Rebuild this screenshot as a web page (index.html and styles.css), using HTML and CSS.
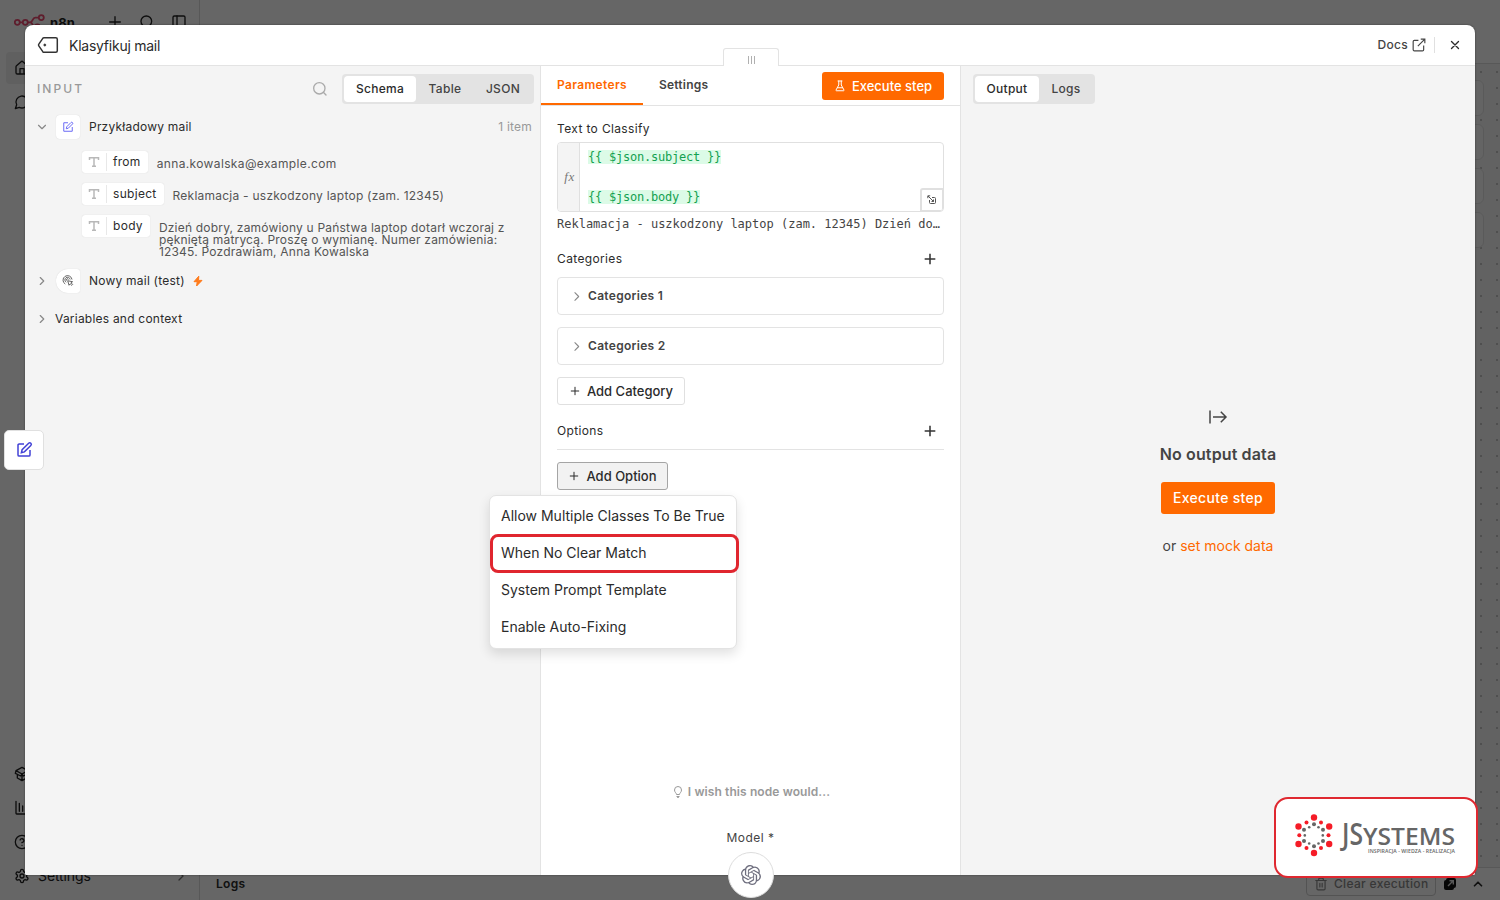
FILE: index.html
```html
<!DOCTYPE html>
<html lang="pl">
<head>
<meta charset="utf-8">
<title>n8n – Klasyfikuj mail</title>
<link rel="stylesheet" href="styles.css">
</head>
<body>
<div class="app">
  <aside class="sidebar">
    <div class="brand">
      <svg class="brand-mark" width="32" height="16" viewBox="0 0 32 16" fill="none" stroke="#ea4b71" stroke-width="1.8"><circle cx="3.3" cy="8.3" r="2.5"/><circle cx="11.3" cy="8.3" r="2.5"/><circle cx="27.3" cy="3.6" r="2.5"/><circle cx="23.3" cy="13" r="2.5"/><path d="M5.8 8.3h3M13.8 8.3h2.4c3 0 2-4.7 5-4.7h3.6M16.2 8.3c3 0 2 4.7 4.6 4.7"/></svg>
      <span class="brand-name">n8n</span>
      <svg class="ic add" width="16" height="16" viewBox="0 0 24 24"><path d="M4 12h16M12 4v16"/></svg>
      <svg class="ic find" width="16" height="16" viewBox="0 0 24 24"><circle cx="11" cy="11" r="8"/><path d="m21 21-4.3-4.3"/></svg>
      <svg class="ic panel" width="16" height="16" viewBox="0 0 24 24"><rect x="3" y="3" width="18" height="18" rx="2"/><path d="M9 3v18"/></svg>
    </div>
    <div class="side-item active"><svg class="ic" width="16" height="16" viewBox="0 0 24 24"><path d="M15 21v-8H9v8M3 10a2 2 0 0 1 .7-1.5l7-6a2 2 0 0 1 2.6 0l7 6A2 2 0 0 1 21 10v9a2 2 0 0 1-2 2H5a2 2 0 0 1-2-2z"/></svg></div>
    <div class="side-item chat"><svg class="ic" width="16" height="16" viewBox="0 0 24 24"><path d="M7.9 20A9 9 0 1 0 4 16.100L2 22Z"/></svg></div>
    <div class="side-bottom">
      <div class="side-item"><svg class="ic" width="16" height="16" viewBox="0 0 24 24"><path d="M12 22v-9M3 7l9-5 9 5-9 5zM3 7l-1 4 8 4 2-3 2 3 8-4-1-4M5 13v5l7 4 7-4v-5"/></svg></div>
      <div class="side-item"><svg class="ic" width="16" height="16" viewBox="0 0 24 24"><path d="M3 2v18a1 1 0 0 0 1 1h18M8 17V5M13 17V9M18 17v-4"/></svg></div>
      <div class="side-item"><svg class="ic" width="16" height="16" viewBox="0 0 24 24"><circle cx="12" cy="12" r="10"/><path d="M9.100 9a3 3 0 0 1 5.800 1c0 2-3 3-3 3M12 17h.01"/></svg></div>
      <div class="side-item"><svg class="ic" width="16" height="16" viewBox="0 0 24 24"><path d="M12.200 2h-.4a2 2 0 0 0-2 2v.2a2 2 0 0 1-1 1.700l-.4.3a2 2 0 0 1-2 0l-.2-.1a2 2 0 0 0-2.700.7l-.2.4a2 2 0 0 0 .7 2.700l.2.1a2 2 0 0 1 1 1.700v.5a2 2 0 0 1-1 1.800l-.2.1a2 2 0 0 0-.7 2.700l.2.4a2 2 0 0 0 2.700.7l.2-.1a2 2 0 0 1 2 0l.4.3a2 2 0 0 1 1 1.700v.2a2 2 0 0 0 2 2h.4a2 2 0 0 0 2-2v-.2a2 2 0 0 1 1-1.700l.4-.3a2 2 0 0 1 2 0l.2.1a2 2 0 0 0 2.700-.7l.2-.4a2 2 0 0 0-.7-2.700l-.2-.1a2 2 0 0 1-1-1.800v-.5a2 2 0 0 1 1-1.700l.2-.1a2 2 0 0 0 .7-2.700l-.2-.4a2 2 0 0 0-2.700-.7l-.2.1a2 2 0 0 1-2 0l-.4-.3a2 2 0 0 1-1-1.700V4a2 2 0 0 0-2-2z"/><circle cx="12" cy="12" r="3"/></svg><span class="side-label">Settings</span><svg class="ic side-chev" width="16" height="16" viewBox="0 0 24 24"><path d="m9 18 6-6-6-6"/></svg></div>
    </div>
  </aside>
  <main class="workspace">
    <div class="topbar"></div>
    <div class="canvas"><i class="tile"></i><i class="tile"></i><i class="tile"></i><i class="tile"></i></div>
    <div class="logbar">
      <span class="logbar-title">Logs</span>
      <span class="clear"><svg class="ic" width="14" height="14" viewBox="0 0 24 24"><path d="M3 6h18M19 6v14a2 2 0 0 1-2 2H7a2 2 0 0 1-2-2V6M8 6V4a2 2 0 0 1 2-2h4a2 2 0 0 1 2 2v2M10 11v6M14 11v6"/></svg>Clear execution</span>
      <svg class="pop" width="14" height="14" viewBox="0 0 14 14"><rect x="1" y="3" width="10" height="10" rx="2" fill="#111"/><rect x="3" y="1" width="10" height="10" rx="2" fill="#111"/><path d="M5 9l5-5M6.500 3.700h3.800v3.800" stroke="#ddd" stroke-width="1.400" fill="none"/></svg>
      <svg class="ic up" width="14" height="14" viewBox="0 0 24 24"><path d="m6 15 6-6 6 6"/></svg>
    </div>
  </main>
</div>
<div class="shade"></div>

<section class="modal">
  <header class="modal-head">
    <svg width="22" height="18" viewBox="0 0 22 18" fill="none" stroke="#333" stroke-width="1.500" stroke-linejoin="round"><path d="M7 1.700h11.800a1.500 1.500 0 0 1 1.500 1.500v11.600a1.500 1.500 0 0 1-1.500 1.500H7a1.500 1.500 0 0 1-1.200-.6L1.800 9.800a1.300 1.300 0 0 1 0-1.600l4-5.900A1.500 1.500 0 0 1 7 1.700z"/><circle cx="7.800" cy="9" r="1" fill="#333" stroke-width=".8"/></svg>
    <h1 class="node-name">Klasyfikuj mail</h1>
    <a class="docs">Docs<svg class="ic" width="14" height="14" viewBox="0 0 24 24"><path d="M15 2h7v7M10 14 22 2M20 13v7a2 2 0 0 1-2 2H4a2 2 0 0 1-2-2V6a2 2 0 0 1 2-2h7"/></svg></a>
    <span class="head-rule"></span>
    <svg class="ic close" width="14" height="14" viewBox="0 0 24 24"><path d="M18 6 6 18M6 6l12 12"/></svg>
    <div class="grip"><i></i><i></i><i></i></div>
  </header>
  <div class="panes">
    <div class="pane input">
      <div class="pane-head">
        <span class="pane-title">INPUT</span>
        <svg class="ic search" width="16" height="16" viewBox="0 0 24 24"><circle cx="11" cy="11" r="8.500"/><path d="m21 21-4-4"/></svg>
        <div class="seg"><span class="on w72">Schema</span><span class="w58">Table</span><span class="w58">JSON</span></div>
      </div>
      <div class="node-row">
        <svg class="ic chev" width="14" height="14" viewBox="0 0 24 24"><path d="m6 9 6 6 6-6"/></svg>
        <span class="node-icon"><svg width="12" height="12" viewBox="0 0 24 24" fill="none" stroke="#6b6bf5" stroke-width="2"><path d="M12 3.500H3.500v17h17V12M17.900 3.100a2 2 0 0 1 3 3L12.500 14.500 8.500 15.500l1-4z"/></svg></span>
        <span class="node-label">Przykładowy mail</span>
        <span class="count">1 item</span>
      </div>
      <div class="fields">
        <div class="field wide"><span class="pill"><span class="type"><svg width="12" height="12" viewBox="0 0 12 12" fill="none" stroke="#b8b8b8" stroke-width="1.500"><path d="M1.500 4V1.700h9V4M6 1.700v8.600M4 10.300h4"/></svg></span><span class="key">from</span></span><p class="value">anna.kowalska@example.com</p></div>
        <div class="field mid"><span class="pill"><span class="type"><svg width="12" height="12" viewBox="0 0 12 12" fill="none" stroke="#b8b8b8" stroke-width="1.500"><path d="M1.500 4V1.700h9V4M6 1.700v8.600M4 10.300h4"/></svg></span><span class="key">subject</span></span><p class="value">Reklamacja - uszkodzony laptop (zam. 12345)</p></div>
        <div class="field"><span class="pill"><span class="type"><svg width="12" height="12" viewBox="0 0 12 12" fill="none" stroke="#b8b8b8" stroke-width="1.500"><path d="M1.500 4V1.700h9V4M6 1.700v8.600M4 10.300h4"/></svg></span><span class="key">body</span></span><p class="value">Dzień dobry, zamówiony u Państwa laptop dotarł wczoraj z<br>pękniętą matrycą. Proszę o wymianę. Numer zamówienia:<br>12345. Pozdrawiam, Anna Kowalska</p></div>
      </div>
      <div class="node-row">
        <svg class="ic chev" width="14" height="14" viewBox="0 0 24 24"><path d="m9 6 6 6-6 6"/></svg>
        <span class="node-icon trigger"><svg width="12" height="12" viewBox="0 0 24 24" fill="none" stroke="#555" stroke-width="1.800"><path d="M6.500 18A9 9 0 1 1 20 9M8.500 14.500A5.300 5.300 0 1 1 16.300 9M10.500 11.500a2 2 0 1 1 2.500-2.500"/><path d="M11.500 11.500l2.500 9 2.300-3 3.200 3.200 1.800-1.800-3.200-3.200 3-2.300z"/></svg></span>
        <span class="node-label">Nowy mail (test)</span>
        <svg class="bolt" width="10" height="12" viewBox="0 0 10 12"><path d="M5.800 1.200 1 6.700h3.200L3.600 11 9 5.400H5.500z" fill="#ff7a1a" stroke="#ff7a1a" stroke-linejoin="round"/></svg>
      </div>
      <div class="node-row context">
        <svg class="ic chev" width="14" height="14" viewBox="0 0 24 24"><path d="m9 6 6 6-6 6"/></svg>
        <span class="node-label">Variables and context</span>
      </div>
    </div>

    <div class="pane params">
      <div class="tabs">
        <span class="tab on">Parameters</span><span class="tab">Settings</span>
        <button class="run"><svg class="ic" width="12" height="12" viewBox="0 0 24 24"><path d="M8 2h8M9.500 2v8L4 20c-.4.900 0 1.500 1 1.500h14c1 0 1.400-.6 1-1.500L14.500 10V2M7 15.500h10"/></svg>Execute step</button>
      </div>
      <div class="form">
        <label class="lbl first">Text to Classify</label>
        <div class="expr">
          <span class="fx">fx</span>
          <div class="code"><div><mark>{{ $json.subject }}</mark></div><div>&nbsp;</div><div><mark>{{ $json.body }}</mark></div></div>
          <span class="expand"><svg width="10" height="10" viewBox="0 0 10 10" fill="none" stroke="#555"><path d="M5 2.500h2.500a1 1 0 0 1 1 1v4a1 1 0 0 1-1 1h-4a1 1 0 0 1-1-1V5M1 1l5.500 5.500M.8 3.200V.8h2.400M6.500 4.500v2h-2"/></svg></span>
        </div>
        <div class="preview">Reklamacja - uszkodzony laptop (zam. 12345) Dzień do…</div>
        <div class="lbl-row cats"><span class="lbl">Categories</span><svg class="ic plus" width="16" height="16" viewBox="0 0 24 24"><path d="M4 12h16M12 4v16"/></svg></div>
        <div class="card"><svg class="ic" width="13" height="13" viewBox="0 0 24 24"><path d="m9 5 7 7-7 7"/></svg>Categories 1</div>
        <div class="card"><svg class="ic" width="13" height="13" viewBox="0 0 24 24"><path d="m9 5 7 7-7 7"/></svg>Categories 2</div>
        <button class="add-btn category"><svg class="ic" width="12" height="12" viewBox="0 0 24 24"><path d="M4.500 12h15M12 4.500v15"/></svg>Add Category</button>
        <div class="lbl-row opts"><span class="lbl">Options</span><svg class="ic plus" width="16" height="16" viewBox="0 0 24 24"><path d="M4 12h16M12 4v16"/></svg></div>
        <button class="add-btn option"><svg class="ic" width="12" height="12" viewBox="0 0 24 24"><path d="M4.500 12h15M12 4.500v15"/></svg>Add Option</button>
      </div>
      <div class="wish"><svg width="10" height="12" viewBox="0 0 10 12" fill="none" stroke="#999"><path d="M3.500 8.500C3.500 7 1.500 6.300 1.500 4a3.500 3.500 0 0 1 7 0c0 2.300-2 3-2 4.500zM3.500 10.500h3M4 11.700h2"/></svg>I wish this node would...</div>
      <div class="model">Model *</div>
    </div>

    <div class="pane output">
      <div class="seg"><span class="on w64">Output</span><span class="w54">Logs</span></div>
      <div class="empty">
        <svg width="20" height="16" viewBox="0 0 20 16" fill="none" stroke="#444" stroke-width="1.500"><path d="M2 1.500v13M5 8h13M12.800 2.800 18 8l-5.200 5.200"/></svg>
        <h2 class="empty-title">No output data</h2>
        <button class="run-big">Execute step</button>
        <p class="mock">or <a>set mock data</a></p>
      </div>
    </div>
  </div>
</section>

<div class="float-node"><svg width="18" height="18" viewBox="0 0 24 24" fill="none" stroke="#4242d6" stroke-width="2"><path d="M12 4H5.500A1.500 1.500 0 0 0 4 5.500v13A1.500 1.500 0 0 0 5.500 20h13a1.500 1.500 0 0 0 1.500-1.500V12M18.200 3a2 2 0 0 1 2.900 2.900L12.500 14.500 8.500 15.700l1-4.200z"/></svg></div>
<div class="float-model"><svg width="20" height="20" viewBox="0 0 24 24" fill="#6e6e7e"><path d="M22.282 9.821a5.985 5.985 0 0 0-.516-4.910 6.046 6.046 0 0 0-6.510-2.900A6.065 6.065 0 0 0 4.981 4.180a5.985 5.985 0 0 0-3.998 2.900 6.046 6.046 0 0 0 .743 7.097 5.980 5.980 0 0 0 .510 4.911 6.051 6.051 0 0 0 6.515 2.900A5.985 5.985 0 0 0 13.260 24a6.056 6.056 0 0 0 5.772-4.206 5.990 5.990 0 0 0 3.998-2.900 6.056 6.056 0 0 0-.748-7.073zM13.260 22.430a4.476 4.476 0 0 1-2.876-1.040l.142-.081 4.778-2.758a.795.795 0 0 0 .393-.681v-6.737l2.020 1.169a.071.071 0 0 1 .038.052v5.583a4.504 4.504 0 0 1-4.495 4.493zM3.600 18.304a4.471 4.471 0 0 1-.535-3.014l.142.085 4.783 2.759a.771.771 0 0 0 .780 0l5.843-3.369v2.332a.080.080 0 0 1-.033.062L9.740 19.950a4.500 4.500 0 0 1-6.140-1.646zM2.340 7.896a4.485 4.485 0 0 1 2.366-1.973V11.600a.766.766 0 0 0 .388.677l5.815 3.354-2.020 1.169a.076.076 0 0 1-.071 0l-4.830-2.787A4.504 4.504 0 0 1 2.340 7.872zm16.597 3.855-5.833-3.387L15.119 7.200a.076.076 0 0 1 .071 0l4.830 2.791a4.494 4.494 0 0 1-.676 8.105v-5.678a.790.790 0 0 0-.407-.667zm2.010-3.023-.142-.085-4.774-2.782a.776.776 0 0 0-.785 0L9.409 9.230V6.897a.066.066 0 0 1 .028-.061l4.830-2.787a4.500 4.500 0 0 1 6.680 4.660zm-12.640 4.135-2.020-1.164a.080.080 0 0 1-.038-.057V6.075a4.500 4.500 0 0 1 7.375-3.453l-.142.080L8.704 5.460a.795.795 0 0 0-.393.681zm1.097-2.365 2.602-1.500 2.607 1.500v2.999l-2.597 1.500-2.607-1.500z"/></svg></div>

<div class="menu">
  <div class="menu-item">Allow Multiple Classes To Be True</div>
  <div class="menu-item">When No Clear Match</div>
  <div class="menu-item">System Prompt Template</div>
  <div class="menu-item">Enable Auto-Fixing</div>
  <div class="highlight"></div>
</div>

<div class="badge">
  <svg width="200" height="77" viewBox="1276 799 200 77">
    <g fill="#f51c27"><circle cx="1314" cy="817.500" r="3.200"/><circle cx="1314" cy="853" r="3.200"/><circle cx="1298.500" cy="826.500" r="3.200"/><circle cx="1329.200" cy="826.500" r="3.200"/><circle cx="1298.500" cy="844" r="3.200"/><circle cx="1329.200" cy="844" r="3.200"/><circle cx="1306.500" cy="822.500" r="2"/><circle cx="1321" cy="822.500" r="2"/><circle cx="1306.500" cy="848" r="2"/><circle cx="1321" cy="848" r="2"/><circle cx="1299.300" cy="835.300" r="2"/><circle cx="1328.500" cy="835.300" r="2"/></g>
    <g fill="#666"><circle cx="1314" cy="824.200" r="2"/><circle cx="1314" cy="846.300" r="2"/><circle cx="1304" cy="829.700" r="2"/><circle cx="1323" cy="829.700" r="2"/><circle cx="1304" cy="841" r="2"/><circle cx="1323" cy="841" r="2"/><circle cx="1309.200" cy="827.300" r="1.300"/><circle cx="1318.500" cy="827.300" r="1.300"/><circle cx="1309.200" cy="843.500" r="1.300"/><circle cx="1318.500" cy="843.500" r="1.300"/><circle cx="1304.800" cy="835.400" r="1.300"/><circle cx="1322.800" cy="835.400" r="1.300"/></g>
    <g class="logo-text"><text x="1342" y="844.500" font-size="30" textLength="21" lengthAdjust="spacingAndGlyphs">JS</text><text x="1363" y="844.500" font-size="23" textLength="92" lengthAdjust="spacingAndGlyphs">YSTEMS</text><text class="tagline" x="1368" y="853.400" font-size="5.200" textLength="87" lengthAdjust="spacing">INSPIRACJA - WIEDZA - REALIZACJA</text></g>
  </svg>
</div>
</body>
</html>
```

FILE: styles.css
```css
* { box-sizing: border-box; }
body { margin: 0; width: 1500px; height: 900px; overflow: hidden; position: relative; font-family: Inter, "Noto Sans", sans-serif; font-size: 12px; line-height: 16px; color: #2b2b2b; }
h1, h2, p { margin: 0; font-weight: 400; }
button { font-family: inherit; margin: 0; padding: 0; border: 0; display: flex; align-items: center; justify-content: center; }
svg { flex: none; display: block; }
.ic { fill: none; stroke: currentColor; stroke-width: 2; stroke-linecap: round; stroke-linejoin: round; }

/* Workspace behind the dialog */
.app { display: flex; width: 1500px; height: 900px; background: #fff; }
.sidebar { width: 200px; border-right: 1px solid #dcdcdc; display: flex; flex-direction: column; color: #222; }
.brand { height: 52px; padding: 14px 0 0 14px; display: flex; align-items: flex-start; }
.brand-name { margin: 1px 0 0 4px; width: 54px; font-size: 13px; font-weight: 700; letter-spacing: .1px; }
.add { margin-left: 3px; }
.find { margin-left: 16px; }
.panel { margin-left: 16px; }
.side-item { height: 34px; margin: 0 6px; padding-left: 8px; display: flex; align-items: center; }
.side-item.active { height: 32px; background: #efefef; border-radius: 4px; }
.chat { margin-top: 1px; }
.side-bottom { margin-top: auto; padding-bottom: 7px; }
.side-label { margin-left: 8px; width: 133px; font-size: 14px; letter-spacing: -.1px; }
.side-chev { color: #777; margin-left: 2px; }
.workspace { flex: 1; display: flex; flex-direction: column; }
.topbar { height: 64px; border-bottom: 1px solid #dcdcdc; }
.canvas { flex: 1; padding: 16px 16px 0 0; display: flex; flex-direction: column; align-items: flex-end; gap: 8px; background: radial-gradient(circle, #c4c4c4 .7px, transparent 1.1px) 9px 0 / 16px 16px #f5f5f5; }
.tile { width: 36px; height: 36px; border: 1px solid #e2e2e2; border-radius: 6px; background: #fbfbfb; }
.logbar { height: 33px; border-top: 1px solid #dcdcdc; padding: 0 15px 0 16px; display: flex; align-items: center; }
.logbar-title { flex: 1; font-weight: 600; letter-spacing: .3px; }
.clear { width: 130px; height: 24px; padding: 0 7px; border: 1px solid #d0d0d0; border-radius: 4px; display: flex; align-items: center; gap: 6px; font-size: 12px; font-weight: 500; color: #8a8a8a; letter-spacing: .32px; white-space: nowrap; }
.pop { margin-left: 7px; }
.up { margin-left: 14px; stroke-width: 3; }
.shade { position: absolute; inset: 0; background: rgba(0, 0, 0, .6); }

/* Dialog */
.modal { position: absolute; left: 25px; top: 25px; width: 1450px; height: 850px; background: #fff; border-radius: 8px 8px 2px 2px; overflow: hidden; display: flex; flex-direction: column; box-shadow: 0 0 2px rgba(0, 0, 0, .5); }
.modal-head { position: relative; flex: none; height: 41px; border-bottom: 1px solid #e3e3e3; padding: 0 13px 0 12px; display: flex; align-items: center; }
.node-name { margin-left: 10px; padding-top: 2px; font-size: 14px; letter-spacing: -.25px; }
.docs { margin-left: auto; display: flex; align-items: center; gap: 4px; font-weight: 500; letter-spacing: .3px; color: #444; }
.docs .ic { stroke-width: 2; stroke-linecap: butt; stroke-linejoin: miter; }
.head-rule { width: 1px; height: 16px; margin: 0 13px 0 8px; background: #e0e0e0; }
.close { stroke-width: 2.3; }
.grip { position: absolute; left: 698px; top: 23px; width: 56px; height: 18px; border: 1px solid #e3e3e3; border-bottom: 0; border-radius: 3px 3px 0 0; background: #fff; display: flex; justify-content: center; gap: 2px; padding-top: 7px; }
.grip i { width: 1px; height: 8px; background: #b0b0b0; }
.panes { flex: 1; display: flex; }
.pane { display: flex; flex-direction: column; }
.input { width: 515px; background: #f4f4f4; }
.params { width: 421px; border: solid #e3e3e3; border-width: 0 1px; }
.output { flex: 1; background: #f4f4f4; padding: 8px 12px 0; align-items: flex-start; }

.pane-head { height: 49px; padding: 8px 6px 0 12px; display: flex; align-items: flex-start; }
.pane-title { flex: 1; line-height: 30px; font-weight: 500; letter-spacing: 2.1px; color: #999; }
.search { margin: 7px 14px 0 0; color: #aaa; }
.seg { height: 30px; padding: 2px; border-radius: 4px; background: #e3e3e3; display: flex; }
.seg span { line-height: 26px; border-radius: 4px; text-align: center; font-weight: 500; letter-spacing: .3px; color: #444; }
.seg .on { background: #fff; color: #2b2b2b; }
.w72 { width: 72px; }
.w58 { width: 58px; }
.w64 { width: 64px; }
.w54 { width: 54px; }

.node-row { height: 24px; padding: 0 8px 0 10px; display: flex; align-items: center; letter-spacing: .22px; }
.chev { color: #888; margin-right: 7px; }
.node-icon { width: 24px; height: 24px; margin-right: 9px; border-radius: 4px; background: #fff; display: flex; align-items: center; justify-content: center; box-shadow: 0 0 1px #ccc; }
.trigger { border-radius: 12px 3px 3px 12px; }
.count { margin-left: auto; color: #999; }
.bolt { margin-left: 8px; }
.context { margin-top: 14px; }
.context .chev { margin-right: 6px; }
.fields { padding: 12px 30px 0 57px; height: 130px; display: flex; flex-direction: column; gap: 10px; }
.field { height: 22px; display: flex; align-items: flex-start; }
.pill { height: 22px; padding-right: 7px; background: #fff; border-radius: 3px; display: flex; align-items: center; box-shadow: 0 0 1px #ccc; }
.type { width: 25px; height: 18px; margin-right: 6px; border-right: 1px solid #e8e8e8; display: flex; align-items: center; justify-content: center; }
.key { letter-spacing: .3px; }
.value { margin: 7px 0 0 9px; line-height: 12px; color: #555; letter-spacing: .2px; white-space: nowrap; }
.mid .value { letter-spacing: .24px; }
.wide .value { letter-spacing: .36px; }

.tabs { flex: none; height: 40px; border-bottom: 1px solid #e3e3e3; padding-right: 16px; display: flex; align-items: flex-start; font-weight: 600; color: #444; }
.tab { height: 39px; line-height: 38px; padding: 0 16px; letter-spacing: .2px; }
.tab.on { width: 102px; padding-right: 0; letter-spacing: .35px; color: #ff6900; border-bottom: 2px solid #ff6900; }
.run { width: 122px; height: 28px; margin: 6px 0 0 auto; gap: 6px; border-radius: 3px; background: #ff6900; color: #fff; font-size: 13px; font-weight: 500; }
.form { padding: 0 16px; display: flex; flex-direction: column; }
.lbl { letter-spacing: .36px; }
.first { margin-top: 15px; }
.expr { position: relative; height: 70px; margin-top: 5px; border: 1px solid #e0e0e0; border-radius: 4px; display: flex; overflow: hidden; }
.fx { width: 22px; background: #f4f4f4; border-right: 1px solid #e0e0e0; padding-left: 2px; display: flex; align-items: center; justify-content: center; font: italic 13px "Liberation Serif", serif; letter-spacing: .5px; color: #777; }
.code { padding: 4px 0 0 8px; font: 12px/20px "DejaVu Sans Mono", monospace; letter-spacing: -.22px; }
.code mark { background: #dcfbe7; color: #12a150; }
.expand { position: absolute; right: -1px; bottom: -1px; width: 24px; height: 24px; border: 2px solid #e0e0e0; border-radius: 3px 0 3px 0; background: #fff; display: flex; align-items: center; justify-content: center; }
.preview { margin-top: 4px; font: 12px/16px "DejaVu Sans Mono", monospace; color: #444; white-space: nowrap; }
.lbl-row { display: flex; justify-content: space-between; align-items: center; padding-right: 6px; }
.plus { stroke-width: 2.3; stroke-linecap: butt; color: #333; }
.cats { height: 36px; margin-top: 9px; }
.card { height: 38px; margin-bottom: 12px; padding-left: 12px; border: 1px solid #e3e3e3; border-radius: 4px; display: flex; align-items: center; gap: 5px; font-weight: 600; color: #444; letter-spacing: .3px; }
.card .ic { color: #888; }
.add-btn { height: 28px; gap: 6px; border: 1px solid #e0e0e0; border-radius: 3px; background: #fff; color: #2b2b2b; font-size: 13px; font-weight: 500; }
.category { width: 128px; }
.option { width: 111px; border-color: #a5a5a5; background: #f2f2f2; }
.opts { height: 37px; margin: 8px 0 12px; border-bottom: 1px solid #e3e3e3; }
.wish { margin: auto 0 30px; display: flex; justify-content: center; gap: 5px; align-items: center; font-weight: 600; color: #999; letter-spacing: .1px; padding-left: 2px; }
.model { margin-bottom: 29px; text-align: center; letter-spacing: .45px; color: #444; }

.empty { align-self: stretch; display: flex; flex-direction: column; align-items: center; padding-top: 305px; }
.empty-title { margin-top: 19px; font-size: 16px; line-height: 20px; font-weight: 600; letter-spacing: .13px; color: #444; }
.run-big { width: 114px; height: 32px; margin-top: 18px; padding-bottom: 2px; border-radius: 3px; background: #ff6900; color: #fff; font-size: 14px; font-weight: 500; letter-spacing: .3px; }
.mock { margin-top: 22px; font-size: 14px; line-height: 20px; color: #444; }
.mock a { color: #ff6900; }

/* Items floating over the dialog edge */
.float-node { position: absolute; left: 4px; top: 430px; width: 40px; height: 40px; border: 1px solid #e0e0e0; border-radius: 5px; background: #fff; display: flex; align-items: center; justify-content: center; }
.float-model { position: absolute; left: 728px; top: 852px; width: 46px; height: 46px; border: 1px solid #ddd; border-radius: 50%; background: #fff; display: flex; align-items: center; justify-content: center; }

.menu { position: absolute; left: 489px; top: 495px; width: 248px; height: 154px; padding: 1px 0 0 11px; border: 1px solid #e3e3e3; border-radius: 7px; background: #fff; box-shadow: 0 5px 12px rgba(0, 0, 0, .12); font-size: 14px; }
.menu-item { height: 37px; line-height: 37px; white-space: nowrap; }
.highlight { position: absolute; left: 0; top: 38px; width: 249px; height: 39px; border: 3px solid #e0262f; border-radius: 8px; }

.badge { position: absolute; left: 1274px; top: 797px; width: 204px; height: 81px; border: 2px solid #df2830; border-radius: 14px; background: #fff; }
.logo-text { font-family: "Open Sans", "Noto Sans", sans-serif; font-weight: 600; fill: #666; }
```
